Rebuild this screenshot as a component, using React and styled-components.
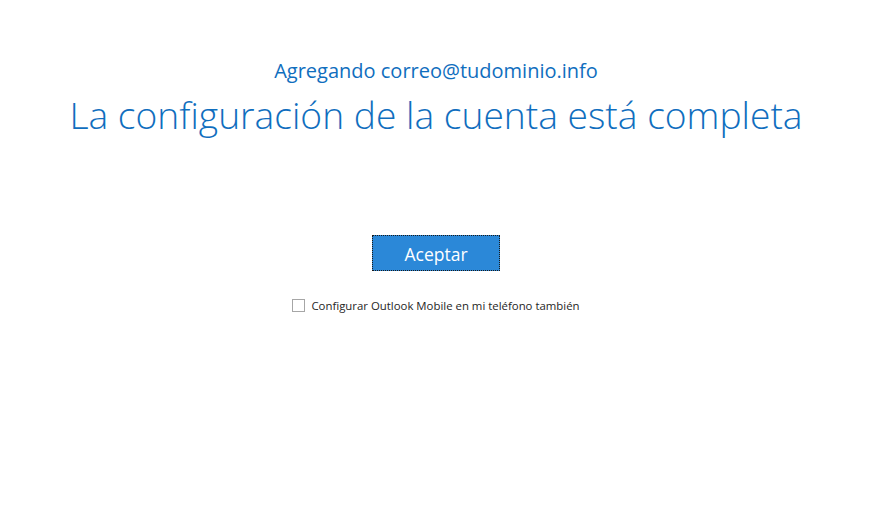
import React, { useState } from 'react'
import styled, { createGlobalStyle } from 'styled-components'

const GlobalStyle = createGlobalStyle`
  html, body {
    margin: 0;
    padding: 0;
    background: #ffffff;
  }
  body {
    font-family: "Open Sans", "Noto Sans", sans-serif;
  }
`

const Page = styled.main`
  display: flex;
  flex-direction: column;
  align-items: center;
  width: 872px;
  height: 507px;
  padding-top: 58px;
  box-sizing: border-box;
`

const Subtitle = styled.h2`
  margin: 0;
  font-size: 20px;
  font-weight: 400;
  line-height: 26px;
  color: #106ebe;
`

const Heading = styled.h1`
  margin: 8px 0 0;
  font-size: 37.2px;
  font-weight: 300;
  line-height: 46px;
  color: #106ebe;
  white-space: nowrap;
`

const Actions = styled.div`
  display: flex;
  flex-direction: column;
  align-items: center;
  margin-top: 97px;
  gap: 27px;
`

const Button = styled.button`
  width: 128px;
  height: 36px;
  border: 1px dotted #1a1a1a;
  background: #2b88d8;
  color: #ffffff;
  font-family: inherit;
  font-size: 17.5px;
  padding: 1px 0 0;
  cursor: pointer;
`

const CheckRow = styled.label`
  display: flex;
  align-items: center;
  gap: 6px;
  font-size: 11.4px;
  line-height: 15px;
  color: #262626;
  cursor: pointer;
`

const Box = styled.span`
  width: 11px;
  height: 11px;
  border: 1px solid #a6a6a6;
  background: ${p => (p.checked ? '#2b88d8' : '#ffffff')};
`

export default function App() {
  const [checked, setChecked] = useState(false)
  return (
    <>
      <GlobalStyle />
      <Page>
        <Subtitle>Agregando correo@tudominio.info</Subtitle>
        <Heading>La configuración de la cuenta está completa</Heading>
        <Actions>
          <Button>Aceptar</Button>
          <CheckRow onClick={() => setChecked(!checked)}>
            <Box checked={checked} />
            Configurar Outlook Mobile en mi teléfono también
          </CheckRow>
        </Actions>
      </Page>
    </>
  )
}
